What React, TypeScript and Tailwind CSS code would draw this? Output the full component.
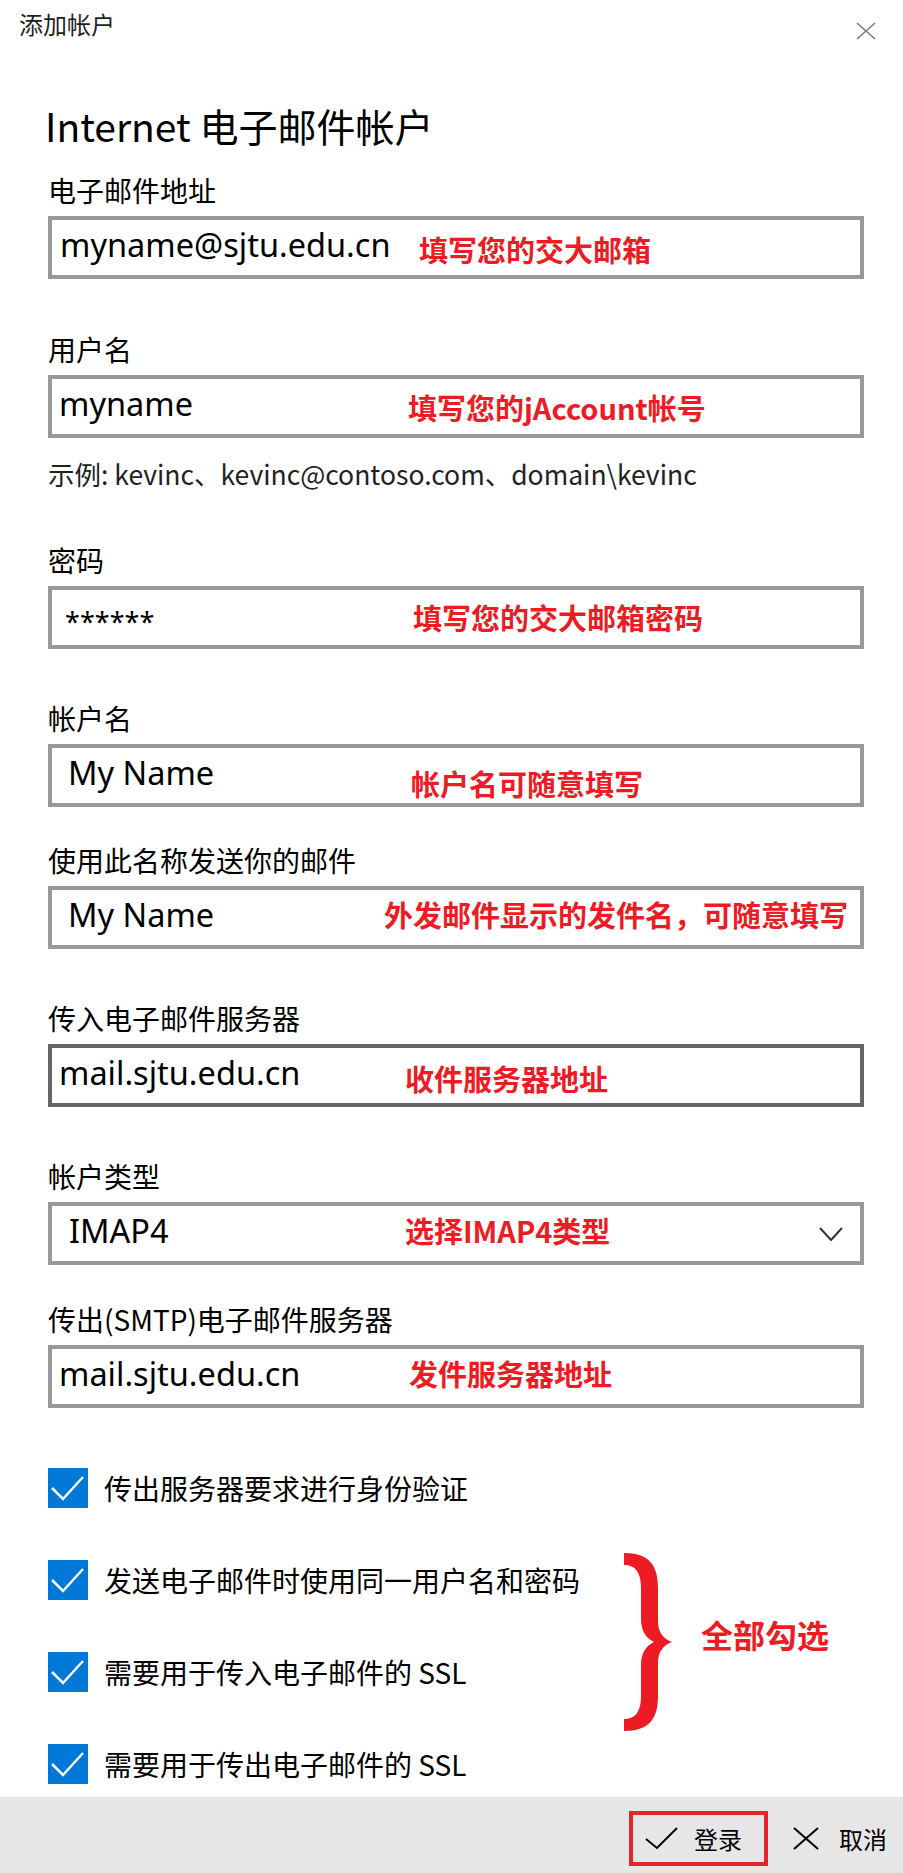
const fields = [
  { label: "电子邮件地址", value: "myname@sjtu.edu.cn", note: "填写您的交大邮箱", mt: "mt-[23px]", pad: "pl-[8px] pb-[6px]", text: "text-[32.5px]", pos: "left-[367px] top-[15px]" },
  { label: "用户名", value: "myname", note: "填写您的jAccount帐号", mt: "mt-[52px]", pad: "pl-[7px] pb-[6px]", text: "text-[32.5px]", pos: "left-[356px] top-[14px]", hint: true },
  { label: "密码", value: "******", note: "填写您的交大邮箱密码", mt: "mt-[50px]", pad: "pl-[13px] pt-[8px]", text: "text-[27px]", pos: "left-[361px] top-[13px]" },
  { label: "帐户名", value: "My Name", note: "帐户名可随意填写", mt: "mt-[51px]", pad: "pl-[16px] pb-[6px]", text: "text-[32.5px]", pos: "left-[359px] top-[21px]" },
  { label: "使用此名称发送你的邮件", value: "My Name", note: "外发邮件显示的发件名，可随意填写", mt: "mt-[35px]", pad: "pl-[16px] pb-[6px]", text: "text-[32.5px]", pos: "left-[332px] top-[10px]" },
  { label: "传入电子邮件服务器", value: "mail.sjtu.edu.cn", note: "收件服务器地址", mt: "mt-[51px]", pad: "pl-[7px] pb-[6px]", text: "text-[32.5px]", pos: "left-[353px] top-[16px]", dark: true },
  { label: "帐户类型", value: "IMAP4", note: "选择IMAP4类型", mt: "mt-[51px]", pad: "pl-[17px] pb-[6px]", text: "text-[32.5px]", pos: "left-[353px] top-[10px]", select: true },
  { label: "传出(SMTP)电子邮件服务器", value: "mail.sjtu.edu.cn", note: "发件服务器地址", mt: "mt-[36px]", pad: "pl-[7px] pb-[6px]", text: "text-[32.5px]", pos: "left-[357px] top-[10px]" },
];

const checks = [
  "传出服务器要求进行身份验证",
  "发送电子邮件时使用同一用户名和密码",
  "需要用于传入电子邮件的 SSL",
  "需要用于传出电子邮件的 SSL",
];

const App = () => {
  return (
    <div className="relative flex h-[1873px] w-full flex-col overflow-hidden bg-white font-['Noto_Sans_CJK_SC',sans-serif] text-black">
      {/* title bar */}
      <div className="flex items-start justify-between pl-[19px] pr-[27px] pt-2">
        <div className="text-[24px] leading-[32px] text-[#1f1f1f]">添加帐户</div>
        <svg className="mt-[14px]" width="20" height="18" viewBox="0 0 20 18">
          <line x1="1" y1="1" x2="19" y2="17" stroke="#777" strokeWidth="1.5" />
          <line x1="19" y1="1" x2="1" y2="17" stroke="#777" strokeWidth="1.5" />
        </svg>
      </div>

      <div className="pl-12 pr-[39px]">
        <h1 className="mt-[61px] ml-[-3px] text-[39px] font-normal leading-[48px]">Internet 电子邮件帐户</h1>

        {fields.map((f, i) => (
          <div key={i}>
            <div className={f.mt}>
              <div className="mb-2 text-[28px] leading-[36px]">{f.label}</div>
              <div
                className={`relative flex h-[63px] items-center border-4 ${f.pad} ${
                  f.dark ? "border-[#666666]" : "border-[#999999]"
                }`}
              >
                <span className={`font-['Noto_Sans',sans-serif] leading-[40px] ${f.text}`}>{f.value}</span>
                <span className={`absolute whitespace-nowrap text-[29px] font-bold leading-[29px] text-[#ed1c24] ${f.pos}`}>
                  {f.note}
                </span>
                {f.select && (
                  <svg className="absolute right-[17px] top-[21px]" width="24" height="14" viewBox="0 0 24 14">
                    <polyline points="1,1 12,13 23,1" fill="none" stroke="#333" strokeWidth="2" />
                  </svg>
                )}
              </div>
            </div>
            {f.hint && (
              <div className="mt-[18px] text-[26.5px] leading-[36px] text-[#222]">
                示例: kevinc、kevinc@contoso.com、domain\kevinc
              </div>
            )}
          </div>
        ))}
      </div>

      {/* checkboxes */}
      <div className="relative mt-[60px]">
        <div className="flex flex-col gap-[52px] pl-12">
          {checks.map((c, i) => (
            <div key={i} className="flex items-center gap-4">
              <div className="flex h-10 w-10 items-center justify-center bg-[#0078d7]">
                <svg width="40" height="40" viewBox="0 0 40 40">
                  <polyline points="4,20 15,31 35,9" fill="none" stroke="#fff" strokeWidth="2.5" />
                </svg>
              </div>
              <span className="text-[28px] leading-[40px]">{c}</span>
            </div>
          ))}
        </div>
        <div className="absolute left-[624px] top-[85px] flex items-center">
          <svg width="48" height="178" viewBox="0 0 48 178">
            <path
              d="M0 0 C25 0 34 12 34 35 L34 68 C34 80 40 86 48 89 C40 92 34 98 34 110 L34 143 C34 166 25 178 0 178 L0 166 C12 166 17 158 17 143 L17 112 C17 100 22 93 30 89 C22 85 17 78 17 66 L17 35 C17 20 12 12 0 12 Z"
              fill="#ed1c24"
            />
          </svg>
          <span className="mb-4 ml-[29px] text-[32px] font-bold leading-[32px] text-[#ed1c24]">全部勾选</span>
        </div>
      </div>

      {/* footer */}
      <div className="mt-auto flex h-[76px] items-start justify-end bg-[#e6e6e6] pr-4 pt-[14px]">
        <button className="flex h-[55px] w-[139px] items-center border-4 border-[#e3262c] pl-3">
          <svg width="33" height="23" viewBox="0 0 33 23">
            <polyline points="1,12 12,21 32,1" fill="none" stroke="#000" strokeWidth="2" />
          </svg>
          <span className="ml-[16px] text-[24px] leading-[32px]">登录</span>
        </button>
        <div className="ml-[25px] flex h-[55px] items-center">
          <svg width="26" height="23" viewBox="0 0 26 23">
            <line x1="1" y1="1" x2="25" y2="22" stroke="#000" strokeWidth="2" />
            <line x1="25" y1="1" x2="1" y2="22" stroke="#000" strokeWidth="2" />
          </svg>
          <span className="ml-[20px] text-[24px] leading-[32px]">取消</span>
        </div>
      </div>
    </div>
  );
};

export default App;
